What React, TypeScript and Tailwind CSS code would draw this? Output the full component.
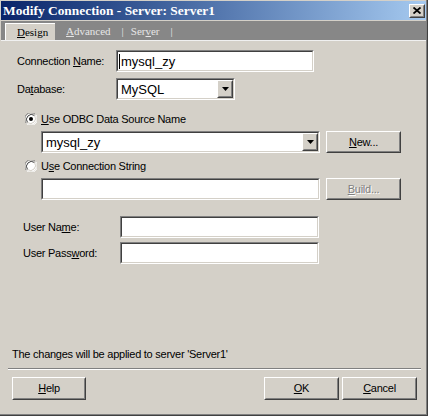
import React from "react";

const sans = "font-['Liberation_Sans',Arial,sans-serif] text-[11px] tracking-[-0.25px] leading-[13px] text-black";

function Sunken({ className, children }: { className: string; children?: React.ReactNode }) {
  return (
    <div className={`border border-t-[#808080] border-l-[#808080] border-b-white border-r-white ${className}`}>
      <div className="h-full w-full bg-white border border-t-[#404040] border-l-[#404040] border-b-[#d4d0c8] border-r-[#d4d0c8] flex items-stretch">
        {children}
      </div>
    </div>
  );
}

function Raised({ className, children }: { className: string; children?: React.ReactNode }) {
  return (
    <div className={`bg-[#d4d0c8] border border-t-white border-l-white border-b-[#404040] border-r-[#404040] ${className}`}>
      <div className="h-full w-full border border-t-[#d4d0c8] border-l-[#d4d0c8] border-b-[#808080] border-r-[#808080] flex items-center justify-center">
        {children}
      </div>
    </div>
  );
}

function Arrow() {
  return (
    <svg width="7" height="4" viewBox="0 0 7 4">
      <path d="M0 0H7L3.5 4Z" fill="#000" />
    </svg>
  );
}

function Radio({ checked }: { checked?: boolean }) {
  return (
    <svg width="12" height="12" viewBox="0 0 12 12" className="shrink-0">
      <circle cx="6" cy="6" r="5.5" fill="#fff" />
      <path d="M1.5 10.5 A6 6 0 0 1 10.5 1.5" stroke="#808080" strokeWidth="1" fill="none" />
      <path d="M2.5 9.5 A5 5 0 0 1 9.5 2.5" stroke="#404040" strokeWidth="1" fill="none" />
      <path d="M10.5 1.5 A6 6 0 0 1 1.5 10.5" stroke="#ffffff" strokeWidth="1" fill="none" />
      <path d="M9.5 2.5 A5 5 0 0 1 2.5 9.5" stroke="#d4d0c8" strokeWidth="1" fill="none" />
      {checked && <circle cx="6" cy="6" r="2" fill="#000" />}
    </svg>
  );
}

function U({ children }: { children: React.ReactNode }) {
  return <span className="underline underline-offset-[1px]">{children}</span>;
}

export default function App() {
  return (
    <div className="w-[428px] h-[416px] bg-[#d4d0c8] border-r border-b border-r-[#404040] border-b-[#404040]">
      <div className="h-full w-full pl-px pt-px flex flex-col border-r border-b border-r-[#808080] border-b-[#808080]">
        {/* Title bar */}
        <div className="h-[19px] shrink-0 flex items-center pl-[2px] pr-[1px] bg-linear-to-r from-[#0a246a] to-[#a6caf0]">
          <span className="font-['Liberation_Serif','Times_New_Roman',serif] font-bold text-[13.4px] leading-[15px] text-white whitespace-nowrap">
            Modify Connection - Server: Server1
          </span>
          <div className="ml-auto">
            <Raised className="w-[16px] h-[14px]">
              <svg width="8" height="7" viewBox="0 0 8 7">
                <path d="M0.5 0.5L7.5 6.5M7.5 0.5L0.5 6.5" stroke="#000" strokeWidth="1.8" />
              </svg>
            </Raised>
          </div>
        </div>
        <div className="h-px shrink-0 bg-[#d4d0c8]" />
        {/* Tab bar */}
        <div className="h-[19px] shrink-0 bg-[#878787] flex items-end font-['Liberation_Serif','Times_New_Roman',serif] text-[11px] leading-[13px]">
          <div className="ml-[4px] w-[50px] h-[17px] bg-[#d4d0c8] border-t border-l border-t-white border-l-white pl-[11px] flex items-center text-black">
            <U>D</U>esign
          </div>
          <div className="h-[17px] flex items-center text-[#e6e6e6] whitespace-pre">
            <span className="ml-[11px]"><U>A</U>dvanced</span>
            <span className="ml-[11px]">|</span>
            <span className="ml-[7px]">Ser<U>v</U>er</span>
            <span className="ml-[11px]">|</span>
          </div>
        </div>
        <div className="h-px shrink-0 bg-[#f0f0f0]" />

        {/* Content */}
        <div className={`flex-1 flex flex-col ${sans}`}>
          <div className="mt-[9px] flex items-center pl-[16px]">
            <div className="w-[99px]">Connection <U>N</U>ame:</div>
            <Sunken className="w-[198px] h-[22px]">
              <div className="flex items-center pl-[1px] text-[13px] leading-[15px] tracking-normal">
                <span className="w-px h-[15px] bg-black mr-px" />
                mysql_zy
              </div>
            </Sunken>
          </div>

          <div className="mt-[6px] flex items-center pl-[16px]">
            <div className="w-[99px]">Da<U>t</U>abase:</div>
            <Sunken className="w-[119px] h-[22px]">
              <div className="flex-1 flex items-center pl-[3px] text-[13px] leading-[15px] tracking-normal">MySQL</div>
              <Raised className="w-[16px] h-full">
                <Arrow />
              </Raised>
            </Sunken>
          </div>

          <div className="mt-[12px] h-[14px] flex items-center pl-[24px] gap-[4px]">
            <Radio checked />
            <span><U>U</U>se ODBC Data Source Name</span>
          </div>

          <div className="mt-[5px] flex items-center pl-[40px] gap-[6px]">
            <Sunken className="w-[279px] h-[22px]">
              <div className="flex-1 flex items-center pl-[3px] text-[13px] leading-[15px] tracking-normal">mysql_zy</div>
              <Raised className="w-[16px] h-full">
                <Arrow />
              </Raised>
            </Sunken>
            <Raised className="w-[75px] h-[22px]">
              <span><U>N</U>ew...</span>
            </Raised>
          </div>

          <div className="mt-[6px] h-[14px] flex items-center pl-[24px] gap-[4px]">
            <Radio />
            <span>U<U>s</U>e Connection String</span>
          </div>

          <div className="mt-[5px] flex items-center pl-[40px] gap-[6px]">
            <Sunken className="w-[279px] h-[22px]" />
            <Raised className="w-[75px] h-[22px]">
              <span className="text-[#808080] [text-shadow:1px_1px_0_#ffffff]"><U>B</U>uild...</span>
            </Raised>
          </div>

          <div className="mt-[16px] flex items-center pl-[22px]">
            <div className="w-[97px]">User Na<U>m</U>e:</div>
            <Sunken className="w-[199px] h-[22px]" />
          </div>

          <div className="mt-[4px] flex items-center pl-[22px]">
            <div className="w-[97px]">User Pass<U>w</U>ord:</div>
            <Sunken className="w-[199px] h-[22px]" />
          </div>

          <div className="mt-auto pl-[11px] h-[13px] whitespace-nowrap">The changes will be applied to server 'Server1'</div>
          <div className="mt-[7px] ml-[7px] mr-[5px] h-[2px] border-t border-b border-t-[#808080] border-b-white" />
          <div className="mt-[7px] mb-[14px] flex items-center pl-[11px] pr-[9px]">
            <Raised className="w-[74px] h-[23px]">
              <span><U>H</U>elp</span>
            </Raised>
            <Raised className="ml-auto w-[75px] h-[23px]">
              <span><U>O</U>K</span>
            </Raised>
            <Raised className="ml-[3px] w-[75px] h-[23px]">
              <span><U>C</U>ancel</span>
            </Raised>
          </div>
        </div>
      </div>
    </div>
  );
}
